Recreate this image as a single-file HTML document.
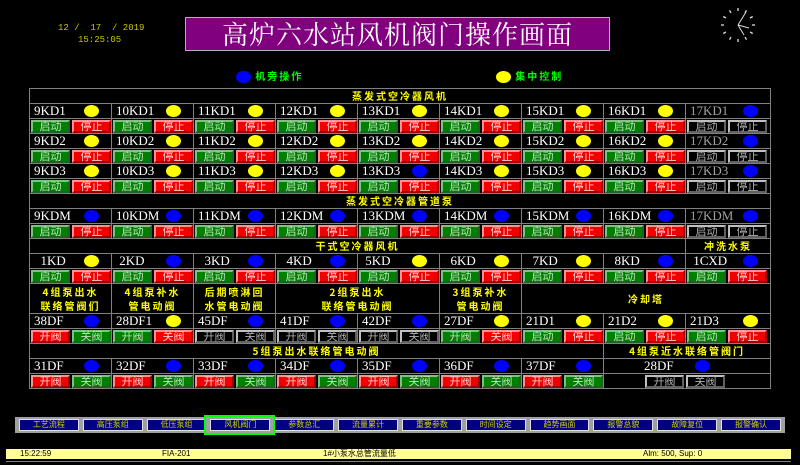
<!DOCTYPE html>
<html><head><meta charset="utf-8">
<style>
*{margin:0;padding:0;box-sizing:border-box}
body{width:800px;height:465px;background:#000;position:relative;overflow:hidden;font-family:"Liberation Serif","Noto Serif CJK SC",serif}
.abs{position:absolute}
#date{left:58px;top:23px;color:#c8c800;font:9px "Liberation Mono",monospace;white-space:pre}
#time{left:78px;top:35px;color:#c8c800;font:9px "Liberation Mono",monospace}
#title{left:185px;top:17px;width:425px;height:34px;background:#800080;border:1px solid #b0b0b0;color:#fff;font:26px "Noto Serif CJK SC",serif;text-align:center;line-height:32px;letter-spacing:1px}
.leg{top:68px;color:#00ff00;font:bold 10px "Noto Sans CJK SC",sans-serif;letter-spacing:2px}
.dot{display:inline-block;width:15px;height:12px;border-radius:50%;vertical-align:middle}
.y{background:#ffff00}.b{background:#0000ff}
table{position:absolute;left:29px;top:88px;border-collapse:collapse;table-layout:fixed;width:741px;border:1px solid #909090}
tr{height:15px}
td{border:1px solid #808080;height:15px;padding:0;overflow:hidden;white-space:nowrap}
td.h{color:#ffff00;font:bold 10px "Noto Sans CJK SC",sans-serif;text-align:center;letter-spacing:2px;line-height:12px}
td.n{color:#fff;font-size:13px;position:relative;padding-left:4px;line-height:12px}
td.n .dot{position:absolute;right:12px;top:1px}
td.n.gr{color:#a0a0a0}
td.p{font-size:0;line-height:0;padding:0 0 0 1px}
.bt{display:inline-block;vertical-align:top;width:39px;height:13px;margin-right:2px;font:11px "Noto Sans CJK SC",sans-serif;line-height:9px;text-align:center;border:2px solid}
.g{background:#008000;border-color:#80c080 #206020 #206020 #80c080;color:#c0e0c0}
.r{background:#f00000;border-color:#ff9090 #a00000 #a00000 #ff9090;color:#ffd0d0}
.k{background:#000;border-color:#c0c0c0 #606060 #606060 #c0c0c0;color:#b0b0b0}
tr.lr{height:30px}
td.l{color:#ffff00;font:bold 10px "Noto Sans CJK SC",sans-serif;letter-spacing:2px;line-height:14px;text-align:center;height:30px}
#nav{left:15px;top:417px;width:770px;height:16px;background:#a0a0a0;display:flex;padding:2px 2px}
#nav div{flex:1;margin:0 2px;background:#000080;border:1px solid #e0e0e0;color:#d0d000;font:8px "Noto Sans CJK SC",sans-serif;text-align:center;line-height:10px}
#sel{left:204px;top:415px;width:71px;height:20px;border:2px solid #00ff00}
#status{left:6px;top:449px;width:785px;height:10px;background:#ffff99;font:8px "Liberation Sans","Noto Sans CJK SC",sans-serif;color:#000;line-height:10px}
#status span{position:absolute;top:0}
#bl{left:6px;top:461px;width:785px;height:1px;background:#808080}
</style></head><body>
<div id="date" class="abs">12 /  17  / 2019</div>
<div id="time" class="abs">15:25:05</div>
<div id="title" class="abs">高炉六水站风机阀门操作画面</div>
<svg class="abs" style="left:718px;top:5px" width="40" height="40" viewBox="-20 -20 40 40">
<g stroke="#ddd" stroke-width="1.3">
<line x1="0" y1="-17" x2="0" y2="-14"/><line x1="8.5" y1="-14.7" x2="7" y2="-12.1"/><line x1="14.7" y1="-8.5" x2="12.1" y2="-7"/><line x1="17" y1="0" x2="14" y2="0"/><line x1="14.7" y1="8.5" x2="12.1" y2="7"/><line x1="8.5" y1="14.7" x2="7" y2="12.1"/><line x1="0" y1="17" x2="0" y2="14"/><line x1="-8.5" y1="14.7" x2="-7" y2="12.1"/><line x1="-14.7" y1="8.5" x2="-12.1" y2="7"/><line x1="-17" y1="0" x2="-14" y2="0"/><line x1="-14.7" y1="-8.5" x2="-12.1" y2="-7"/><line x1="-8.5" y1="-14.7" x2="-7" y2="-12.1"/>
</g>
<g stroke="#ddd" stroke-width="1"><line x1="0" y1="0" x2="8" y2="-13"/><line x1="0" y1="0" x2="11" y2="3"/><line x1="0" y1="0" x2="6" y2="10"/></g>
</svg>
<div class="abs leg" style="left:236px"><span class="dot b"></span> 机旁操作</div>
<div class="abs leg" style="left:496px"><span class="dot y"></span> 集中控制</div>

<table>
<colgroup><col style="width:82px"><col style="width:82px"><col style="width:82px"><col style="width:82px"><col style="width:82px"><col style="width:82px"><col style="width:82px"><col style="width:82px"><col style="width:85px"></colgroup>
<tr><td class="h" colspan="9">蒸发式空冷器风机</td></tr>
<tr><td class="n">9KD1<i class="dot y"></i></td><td class="n">10KD1<i class="dot y"></i></td><td class="n">11KD1<i class="dot y"></i></td><td class="n">12KD1<i class="dot y"></i></td><td class="n">13KD1<i class="dot y"></i></td><td class="n">14KD1<i class="dot y"></i></td><td class="n">15KD1<i class="dot y"></i></td><td class="n">16KD1<i class="dot y"></i></td><td class="n gr">17KD1<i class="dot b"></i></td></tr>
<tr><td class="p"><b class="bt g">启动</b><b class="bt r">停止</b></td><td class="p"><b class="bt g">启动</b><b class="bt r">停止</b></td><td class="p"><b class="bt g">启动</b><b class="bt r">停止</b></td><td class="p"><b class="bt g">启动</b><b class="bt r">停止</b></td><td class="p"><b class="bt g">启动</b><b class="bt r">停止</b></td><td class="p"><b class="bt g">启动</b><b class="bt r">停止</b></td><td class="p"><b class="bt g">启动</b><b class="bt r">停止</b></td><td class="p"><b class="bt g">启动</b><b class="bt r">停止</b></td><td class="p"><b class="bt k">启动</b><b class="bt k">停止</b></td></tr>
<tr><td class="n">9KD2<i class="dot y"></i></td><td class="n">10KD2<i class="dot y"></i></td><td class="n">11KD2<i class="dot y"></i></td><td class="n">12KD2<i class="dot y"></i></td><td class="n">13KD2<i class="dot y"></i></td><td class="n">14KD2<i class="dot y"></i></td><td class="n">15KD2<i class="dot y"></i></td><td class="n">16KD2<i class="dot y"></i></td><td class="n gr">17KD2<i class="dot b"></i></td></tr>
<tr><td class="p"><b class="bt g">启动</b><b class="bt r">停止</b></td><td class="p"><b class="bt g">启动</b><b class="bt r">停止</b></td><td class="p"><b class="bt g">启动</b><b class="bt r">停止</b></td><td class="p"><b class="bt g">启动</b><b class="bt r">停止</b></td><td class="p"><b class="bt g">启动</b><b class="bt r">停止</b></td><td class="p"><b class="bt g">启动</b><b class="bt r">停止</b></td><td class="p"><b class="bt g">启动</b><b class="bt r">停止</b></td><td class="p"><b class="bt g">启动</b><b class="bt r">停止</b></td><td class="p"><b class="bt k">启动</b><b class="bt k">停止</b></td></tr>
<tr><td class="n">9KD3<i class="dot y"></i></td><td class="n">10KD3<i class="dot y"></i></td><td class="n">11KD3<i class="dot y"></i></td><td class="n">12KD3<i class="dot y"></i></td><td class="n">13KD3<i class="dot b"></i></td><td class="n">14KD3<i class="dot y"></i></td><td class="n">15KD3<i class="dot y"></i></td><td class="n">16KD3<i class="dot y"></i></td><td class="n gr">17KD3<i class="dot b"></i></td></tr>
<tr><td class="p"><b class="bt g">启动</b><b class="bt r">停止</b></td><td class="p"><b class="bt g">启动</b><b class="bt r">停止</b></td><td class="p"><b class="bt g">启动</b><b class="bt r">停止</b></td><td class="p"><b class="bt g">启动</b><b class="bt r">停止</b></td><td class="p"><b class="bt g">启动</b><b class="bt r">停止</b></td><td class="p"><b class="bt g">启动</b><b class="bt r">停止</b></td><td class="p"><b class="bt g">启动</b><b class="bt r">停止</b></td><td class="p"><b class="bt g">启动</b><b class="bt r">停止</b></td><td class="p"><b class="bt k">启动</b><b class="bt k">停止</b></td></tr>
<tr><td class="h" colspan="9">蒸发式空冷器管道泵</td></tr>
<tr><td class="n">9KDM<i class="dot b"></i></td><td class="n">10KDM<i class="dot b"></i></td><td class="n">11KDM<i class="dot b"></i></td><td class="n">12KDM<i class="dot b"></i></td><td class="n">13KDM<i class="dot b"></i></td><td class="n">14KDM<i class="dot b"></i></td><td class="n">15KDM<i class="dot b"></i></td><td class="n">16KDM<i class="dot b"></i></td><td class="n gr">17KDM<i class="dot b"></i></td></tr>
<tr><td class="p"><b class="bt g">启动</b><b class="bt r">停止</b></td><td class="p"><b class="bt g">启动</b><b class="bt r">停止</b></td><td class="p"><b class="bt g">启动</b><b class="bt r">停止</b></td><td class="p"><b class="bt g">启动</b><b class="bt r">停止</b></td><td class="p"><b class="bt g">启动</b><b class="bt r">停止</b></td><td class="p"><b class="bt g">启动</b><b class="bt r">停止</b></td><td class="p"><b class="bt g">启动</b><b class="bt r">停止</b></td><td class="p"><b class="bt g">启动</b><b class="bt r">停止</b></td><td class="p"><b class="bt k">启动</b><b class="bt k">停止</b></td></tr>
<tr><td class="h" colspan="8">干式空冷器风机</td><td class="h">冲洗水泵</td></tr>
<tr><td class="n">&nbsp;&nbsp;1KD<i class="dot y"></i></td><td class="n">&nbsp;2KD<i class="dot b"></i></td><td class="n">&nbsp;&nbsp;3KD<i class="dot b"></i></td><td class="n">&nbsp;&nbsp;4KD<i class="dot b"></i></td><td class="n">&nbsp;5KD<i class="dot y"></i></td><td class="n">&nbsp;&nbsp;6KD<i class="dot y"></i></td><td class="n">&nbsp;&nbsp;7KD<i class="dot y"></i></td><td class="n">&nbsp;&nbsp;8KD<i class="dot b"></i></td><td class="n">&nbsp;1CXD<i class="dot b"></i></td></tr>
<tr><td class="p"><b class="bt g">启动</b><b class="bt r">停止</b></td><td class="p"><b class="bt g">启动</b><b class="bt r">停止</b></td><td class="p"><b class="bt g">启动</b><b class="bt r">停止</b></td><td class="p"><b class="bt g">启动</b><b class="bt r">停止</b></td><td class="p"><b class="bt g">启动</b><b class="bt r">停止</b></td><td class="p"><b class="bt g">启动</b><b class="bt r">停止</b></td><td class="p"><b class="bt g">启动</b><b class="bt r">停止</b></td><td class="p"><b class="bt g">启动</b><b class="bt r">停止</b></td><td class="p"><b class="bt g">启动</b><b class="bt r">停止</b></td></tr>
<tr class="lr"><td class="l">4组泵出水<br>联络管阀们</td><td class="l">4组泵补水<br>管电动阀</td><td class="l">后期喷淋回<br>水管电动阀</td><td class="l" colspan="2">2组泵出水<br>联络管电动阀</td><td class="l">3组泵补水<br>管电动阀</td><td class="l" colspan="3">冷却塔</td></tr>
<tr><td class="n">38DF<i class="dot b"></i></td><td class="n">28DF1<i class="dot y"></i></td><td class="n">45DF<i class="dot b"></i></td><td class="n">41DF<i class="dot b"></i></td><td class="n">42DF<i class="dot b"></i></td><td class="n">27DF<i class="dot y"></i></td><td class="n">21D1<i class="dot y"></i></td><td class="n">21D2<i class="dot y"></i></td><td class="n">21D3<i class="dot y"></i></td></tr>
<tr><td class="p"><b class="bt r">开阀</b><b class="bt g">关阀</b></td><td class="p"><b class="bt g">开阀</b><b class="bt r">关阀</b></td><td class="p"><b class="bt k">开阀</b><b class="bt k">关阀</b></td><td class="p"><b class="bt k">开阀</b><b class="bt k">关阀</b></td><td class="p"><b class="bt k">开阀</b><b class="bt k">关阀</b></td><td class="p"><b class="bt g">开阀</b><b class="bt r">关阀</b></td><td class="p"><b class="bt g">启动</b><b class="bt r">停止</b></td><td class="p"><b class="bt g">启动</b><b class="bt r">停止</b></td><td class="p"><b class="bt g">启动</b><b class="bt r">停止</b></td></tr>
<tr><td class="h" colspan="7">5组泵出水联络管电动阀</td><td class="h" colspan="2">4组泵近水联络管阀门</td></tr>
<tr><td class="n">31DF<i class="dot b"></i></td><td class="n">32DF<i class="dot b"></i></td><td class="n">33DF<i class="dot b"></i></td><td class="n">34DF<i class="dot b"></i></td><td class="n">35DF<i class="dot b"></i></td><td class="n">36DF<i class="dot b"></i></td><td class="n">37DF<i class="dot b"></i></td><td class="n" colspan="2" style="padding-left:40px">28DF<i class="dot b" style="right:60px"></i></td></tr>
<tr><td class="p"><b class="bt r">开阀</b><b class="bt g">关阀</b></td><td class="p"><b class="bt r">开阀</b><b class="bt g">关阀</b></td><td class="p"><b class="bt r">开阀</b><b class="bt g">关阀</b></td><td class="p"><b class="bt r">开阀</b><b class="bt g">关阀</b></td><td class="p"><b class="bt r">开阀</b><b class="bt g">关阀</b></td><td class="p"><b class="bt r">开阀</b><b class="bt g">关阀</b></td><td class="p"><b class="bt r">开阀</b><b class="bt g">关阀</b></td><td class="p" colspan="2" style="padding-left:41px"><b class="bt k">开阀</b><b class="bt k">关阀</b></td></tr>
</table>

<div id="nav" class="abs"><div>工艺流程</div><div>高压泵组</div><div>低压泵组</div><div>风机阀门</div><div>参数总汇</div><div>流量累计</div><div>重要参数</div><div>时间设定</div><div>趋势画面</div><div>报警总貌</div><div>故障复位</div><div>报警确认</div></div>
<div id="sel" class="abs"></div>
<div id="status" class="abs"><span style="left:14px">15:22:59</span><span style="left:156px">FIA-201</span><span style="left:317px">1#小泵水总管流量低</span><span style="left:637px">Alm:  500, Sup:    0</span></div>
<div id="bl" class="abs"></div>
</body></html>
